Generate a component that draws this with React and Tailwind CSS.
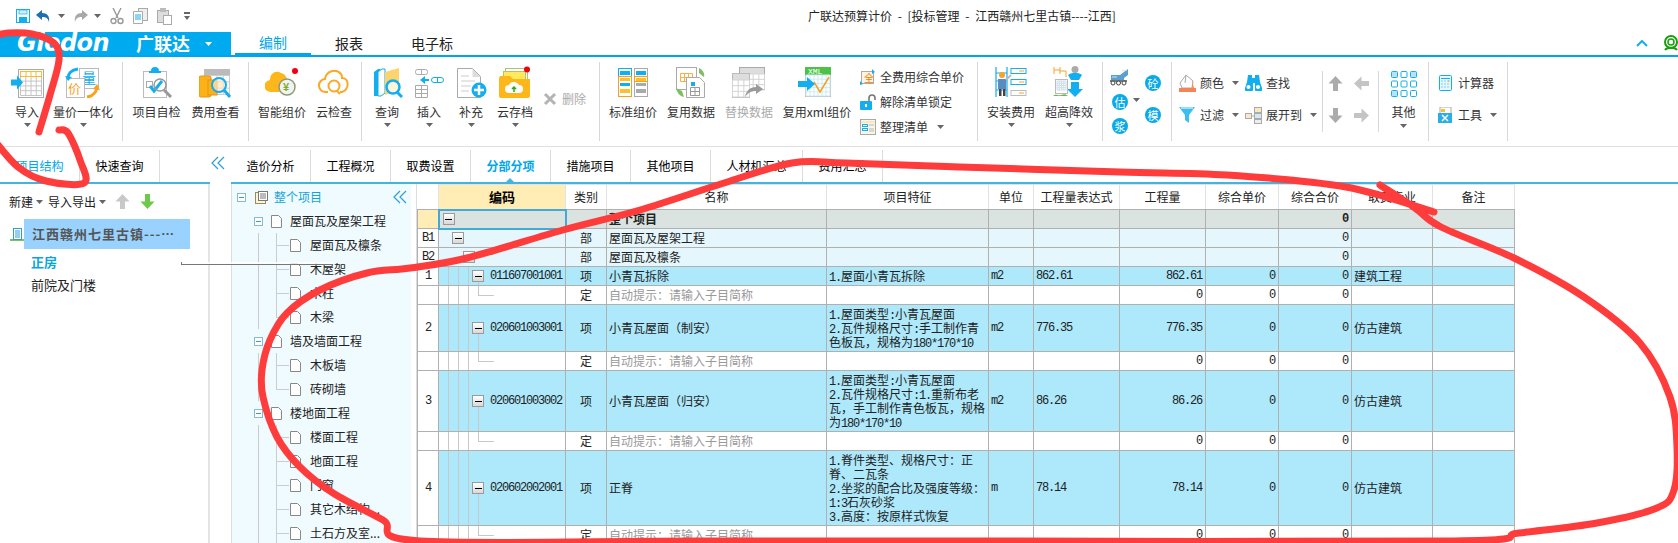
import React from "react";

const Caret = ({ className = "" }) => (
  <svg width="7" height="4" viewBox="0 0 7 4" className={className}><path d="M0 0h7L3.5 4z" fill="#666" /></svg>
);

const Grid = ({ x, y, cols, rows, w, h, stroke = "#aaa" }) => {
  const e = [];
  for (let i = 0; i <= cols; i++) e.push(<line key={"c" + i} x1={x + (w * i) / cols} x2={x + (w * i) / cols} y1={y} y2={y + h} stroke={stroke} />);
  for (let j = 0; j <= rows; j++) e.push(<line key={"r" + j} x1={x} x2={x + w} y1={y + (h * j) / rows} y2={y + (h * j) / rows} stroke={stroke} />);
  return <g>{e}</g>;
};

const I = {
  Import: () => (
    <svg width="34" height="32" viewBox="0 0 34 32">
      <rect x="8.5" y="3.5" width="25" height="28" fill="#fff" stroke="#aaa" />
      <Grid x={10.5} y={5.5} cols={4} rows={5} w={21} h={24} stroke="#c4c4c4" />
      <rect x="10.5" y="5.5" width="21" height="5" fill="#fff" stroke="#fdbb2c" />
      <line x1="16" x2="16" y1="5" y2="10" stroke="#fdbb2c" /><line x1="21" x2="21" y1="5" y2="10" stroke="#fdbb2c" /><line x1="26" x2="26" y1="5" y2="10" stroke="#fdbb2c" />
      <path d="M1 14h6v-4l6 7-6 7v-4H1z" transform="translate(0 -0.5)" fill="#12aeef" />
    </svg>
  ),
  Unify: () => (
    <svg width="36" height="32" viewBox="0 0 36 32">
      <rect x="14.5" y="2.5" width="19" height="20" fill="#fff" stroke="#bbb" />
      <text x="17" y="17" fontSize="14" fill="#12aeef" fontFamily="Noto Sans CJK SC">量</text>
      <rect x="1.5" y="12.5" width="18" height="19" fill="#fff" stroke="#bbb" />
      <text x="3" y="27" fontSize="13" fill="#f9a11b" fontFamily="Noto Sans CJK SC">价</text>
      <path d="M13 3C6 4 3 8 3 12" fill="none" stroke="#12aeef" strokeWidth="3" /><path d="M0 10l3 5 4-4z" fill="#12aeef" />
      <path d="M22 31c7-1 9-5 10-9" fill="none" stroke="#f9a11b" strokeWidth="3" /><path d="M28 23l4-5 3 6z" fill="#f9a11b" />
    </svg>
  ),
  Check: () => (
    <svg width="32" height="32" viewBox="0 0 32 32">
      <rect x="2.5" y="5.5" width="23" height="26" fill="#fff" stroke="#bbb" />
      <path d="M10 5a4 4 0 018 0h2v2h-12v-2z" fill="#12aeef" />
      <rect x="5.5" y="15.5" width="6" height="6" fill="none" stroke="#aaa" />
      <path d="M9 20l4 5 8-10" fill="none" stroke="#12aeef" strokeWidth="3" />
      <circle cx="19" cy="19" r="6" fill="none" stroke="#999" strokeWidth="1.5" />
      <path d="M23 24l7 7" stroke="#999" strokeWidth="3" />
    </svg>
  ),
  Fee: () => (
    <svg width="34" height="32" viewBox="0 0 34 32">
      <rect x="5.5" y="3.5" width="25" height="25" fill="#fff" stroke="#bbb" />
      <rect x="5" y="3" width="26" height="6" fill="#bbb" />
      <Grid x={5.5} y={9.5} cols={4} rows={3} w={25} h={19} stroke="#ccc" />
      <rect x="0" y="10" width="12" height="21" rx="2" fill="#fbb217" stroke="#e9901b" />
      <rect x="9" y="14" width="9" height="15" fill="#fbb217" stroke="#e9901b" />
      <circle cx="20" cy="19" r="7" fill="#fbe6c4" fillOpacity=".7" stroke="#12aeef" strokeWidth="2" />
      <path d="M25 24l6 7" stroke="#12aeef" strokeWidth="3" />
    </svg>
  ),
  Smart: () => (
    <svg width="34" height="32" viewBox="0 0 34 32">
      <path d="M6 26a6 6 0 01-1-12c0-7 6-10 11-7 4 1 6 4 6 8v11z" fill="#fdb71a" />
      <circle cx="22" cy="21" r="8" fill="#f2f2f2" stroke="#8d9a78" strokeWidth="1.5" />
      <text x="18" y="25" fontSize="11" fontWeight="700" fill="#7cad2e" fontFamily="Liberation Sans">¥</text>
      <circle cx="30" cy="5" r="3" fill="#f00010" />
    </svg>
  ),
  Cloud: () => (
    <svg width="32" height="32" viewBox="0 0 32 32">
      <path d="M10 26H8a6.5 6.5 0 01-1-13c1-8 11-11 16-5 1 1 1 3 1 4 7 0 8 11 0 14h-2" fill="none" stroke="#fba924" strokeWidth="2" />
      <circle cx="16" cy="20" r="5.5" fill="none" stroke="#fba924" strokeWidth="2" />
      <path d="M19 25l3 3" stroke="#fba924" strokeWidth="2" />
    </svg>
  ),
  Query: () => (
    <svg width="32" height="32" viewBox="0 0 32 32">
      <path d="M3 6l4-3h3l-3 3v24H3z" fill="#12aeef" />
      <path d="M7 6l4-3h3v24l-4 3H7z" fill="#fff" stroke="#12aeef" />
      <path d="M14 6l14-4v22l-14 5z" fill="#fcd36c" />
      <circle cx="22" cy="21" r="6.5" fill="#fff" fillOpacity=".75" stroke="#12aeef" strokeWidth="2.5" />
      <path d="M26 26l5 5" stroke="#12aeef" strokeWidth="3" />
    </svg>
  ),
  Insert: () => (
    <svg width="30" height="32" viewBox="0 0 30 32">
      <rect x="1.5" y="3.5" width="12" height="5" rx="2" fill="#fff" stroke="#aaa" /><line x1="7.5" x2="7.5" y1="3" y2="9" stroke="#aaa" />
      <path d="M6 14l5-4v3h4v2h-4v3z" fill="#12aeef" />
      <rect x="17.5" y="11.5" width="12" height="5" rx="2.5" fill="#fff" stroke="#12aeef" /><line x1="23.5" x2="23.5" y1="11" y2="17" stroke="#12aeef" />
      <Grid x={1.5} y={19.5} cols={2} rows={3} w={12} h={12} stroke="#aaa" />
    </svg>
  ),
  Add: () => (
    <svg width="32" height="32" viewBox="0 0 32 32">
      <path d="M2.5 2.5h15l8 8v21h-23z" fill="#fff" stroke="#aaa" />
      <path d="M17.5 3v8h8z" fill="#ddd" />
      <path d="M6 10h8M6 15h14M6 20h10M6 25h8" stroke="#ccc" />
      <circle cx="24" cy="24" r="7.5" fill="#12aeef" />
      <path d="M24 19v10M19 24h10" stroke="#fff" strokeWidth="2.5" />
    </svg>
  ),
  Archive: () => (
    <svg width="34" height="32" viewBox="0 0 34 32">
      <rect x="7.5" y="2.5" width="22" height="16" fill="#fff" stroke="#b4c16c" />
      <rect x="5.5" y="5.5" width="22" height="14" fill="#ffe95c" stroke="#b4c16c" />
      <path d="M2 10h10l3 3h17v17a2 2 0 01-2 2H3a2 2 0 01-2-2V12z" fill="#fdb71a" />
      <path d="M11 27a4 4 0 010-8c1-4 8-4 10 0a4 4 0 010 8z" fill="#fff" />
      <path d="M16 26v-5m-2 2l2-2 2 2" stroke="#2fa90f" strokeWidth="1.5" fill="none" />
      <circle cx="29" cy="3.5" r="3" fill="#f00010" />
    </svg>
  ),
  Std: () => (
    <svg width="32" height="32" viewBox="0 0 32 32">
      <rect x="1.5" y="2.5" width="13" height="28" fill="#fff" stroke="#12aeef" /><rect x="17.5" y="2.5" width="13" height="28" fill="#fff" stroke="#aaa" />
      <rect x="3" y="5" width="10" height="4" fill="#12aeef" /><rect x="19" y="5" width="10" height="4" fill="#12aeef" />
      <rect x="1.5" y="10.5" width="13" height="20" fill="#fff" stroke="#fa9f1a" /><rect x="3" y="12" width="10" height="3" fill="#fbc02d" />
      <rect x="17.5" y="10.5" width="13" height="5" fill="#fff" stroke="#fa9f1a" /><rect x="19" y="12" width="10" height="3" fill="#fbc02d" />
      <rect x="3" y="17" width="10" height="3" fill="#12aeef" /><rect x="19" y="17" width="10" height="3" fill="#aaa" />
      <rect x="3" y="23" width="10" height="4" fill="#fbc02d" /><rect x="19" y="23" width="10" height="4" fill="#aaa" />
    </svg>
  ),
  Reuse: () => (
    <svg width="32" height="32" viewBox="0 0 32 32">
      <rect x="1.5" y="1.5" width="20" height="22" fill="#fff" stroke="#aaa" />
      <Grid x={5.5} y={7.5} cols={3} rows={2} w={12} h={8} stroke="#fbb040" />
      <path d="M11.5 11.5h13l5 5v15h-18z" fill="#fff" stroke="#aaa" />
      <Grid x={15.5} y={21.5} cols={2} rows={2} w={9} h={8} stroke="#9a9a9a" />
      <rect x="16" y="16" width="4" height="4" fill="#12aeef" />
      <path d="M24 2c4 2 6 6 5 9l-5-4z" fill="#7cbf63" />
      <path d="M1 22c1 4 3 8 8 9l-2-6z" fill="#7cbf63" />
    </svg>
  ),
  Replace: () => (
    <svg width="34" height="32" viewBox="0 0 34 32">
      <rect x="7.5" y="1.5" width="25" height="22" fill="#fff" stroke="#aaa" /><rect x="8" y="2" width="24" height="6" fill="#ddd" />
      <Grid x={15.5} y={8} cols={3} rows={3} w={17} h={16} stroke="#d4d4d4" />
      <rect x="0.5" y="7.5" width="17" height="24" fill="#fff" stroke="#bbb" /><rect x="1" y="8" width="16" height="6" fill="#ddd" />
      <Grid x={0.5} y={14} cols={3} rows={3} w={17} h={17} stroke="#d4d4d4" />
      <path d="M13 31c1-6 5-10 11-10v-3l7 5-7 5v-3c-5 0-8 2-11 6z" fill="#9a9a9a" />
    </svg>
  ),
  Xml: () => (
    <svg width="40" height="32" viewBox="0 0 40 32">
      <rect x="8.5" y="1.5" width="25" height="29" fill="#fff" stroke="#bbb" />
      <rect x="8" y="1" width="26" height="8" fill="#4dc247" />
      <text x="11" y="8" fontSize="8" fill="#fff" fontFamily="Liberation Mono">XML</text>
      <Grid x={9} y={9} cols={6} rows={5} w={24} h={21} stroke="#cdebf7" />
      <path d="M17 16l6 10 9-15" stroke="#f9a11b" fill="none" strokeWidth="1.5" />
      <path d="M1 15h9v-4l8 7-8 7v-4H1z" fill="#12aeef" />
    </svg>
  ),
  Install: () => (
    <svg width="32" height="32" viewBox="0 0 32 32">
      <path d="M1 1v30M12 1v30M1 7h11M1 15h11M1 24h11" stroke="#12aeef" strokeWidth="1.2" />
      <circle cx="7" cy="9" r="3" fill="#f8a32a" /><rect x="3" y="13" width="8" height="10" fill="#5c8bbf" /><rect x="4" y="23" width="2.5" height="7" fill="#444" /><rect x="8" y="23" width="2.5" height="7" fill="#444" />
      <path d="M11 14l5-5" stroke="#bbb" strokeWidth="2" />
      <rect x="16" y="2.5" width="15" height="5" fill="#fff" stroke="#12aeef" /><rect x="16" y="13.5" width="15" height="5" fill="#fff" stroke="#12aeef" /><rect x="16" y="24.5" width="15" height="5" fill="#fff" stroke="#bbb" />
      <path d="M24 5h5M24 16h5M24 27h5" stroke="#f8a32a" />
    </svg>
  ),
  Lower: () => (
    <svg width="32" height="32" viewBox="0 0 32 32">
      <circle cx="22" cy="3.5" r="3.5" fill="#aaa" />
      <path d="M15 9c4-3 10-3 14 0l-3 5h-8z" fill="#12aeef" />
      <path d="M18 16h8v7h4l-8 8-8-8h4z" fill="#12aeef" />
      <path d="M7 1v7M1 1v7M1 4h6M7 5h6v6" stroke="#f8a32a" fill="none" />
      <rect x="2.5" y="13.5" width="12" height="14" fill="#fff" stroke="#bbb" /><Grid x={4} y={15} cols={4} rows={4} w={9} h={9} stroke="#cde" />
      <path d="M0 30c3-3 4 0 8-1s4-1 7 1z" fill="#6fb84c" />
    </svg>
  ),
  Truck: () => (
    <svg width="20" height="18" viewBox="0 0 20 18">
      <path d="M1 7h9l8-6v6l-4 3v3H1z" fill="#5c9fd0" /><path d="M2 9h5M12 3l5-1" stroke="#cfe7f5" />
      <rect x="0" y="12" width="17" height="2" fill="#777" />
      <circle cx="3" cy="15" r="2" fill="#fff" stroke="#444" /><circle cx="8.5" cy="15" r="2" fill="#fff" stroke="#444" /><circle cx="14" cy="15" r="2" fill="#fff" stroke="#444" />
    </svg>
  ),
  Color: () => (
    <svg width="17" height="18" viewBox="0 0 17 18">
      <path d="M7 1l7 6-1 7H3L1 9z" fill="#fff" stroke="#aaa" /><path d="M7 1l-1 8" stroke="#aaa" />
      <path d="M13 6l2 8h-2z" fill="#f9924b" /><rect x="0" y="14" width="17" height="4" fill="#f4835a" />
    </svg>
  ),
  Binoc: () => (
    <svg width="17" height="16" viewBox="0 0 17 16">
      <path d="M3 0h4v3h3V0h4l1 7 2 6a3 3 0 01-7 2V8H8v7a3 3 0 01-8-2l2-6z" fill="#12aeef" />
      <circle cx="3.5" cy="12" r="2" fill="#fff" /><circle cx="13" cy="12" r="2" fill="#fff" />
    </svg>
  ),
  Filter: () => (
    <svg width="17" height="16" viewBox="0 0 17 16"><path d="M0 0h16l-6 8v8l-4-3V8z" fill="#3dbcef" /><path d="M2 1h12" stroke="#fff" /></svg>
  ),
  Expand: () => (
    <svg width="17" height="17" viewBox="0 0 17 17">
      <rect x=".5" y="6.5" width="6" height="5" fill="#fbe7c4" stroke="#aaa" /><rect x="9.5" y=".5" width="7" height="5" fill="#fbe7c4" stroke="#aaa" /><rect x="9.5" y="6.5" width="7" height="5" fill="#cfe9f7" stroke="#aaa" /><rect x="9.5" y="12.5" width="7" height="4" fill="#eee" stroke="#aaa" />
      <path d="M7 9h2" stroke="#aaa" />
    </svg>
  ),
  Arrow: ({ d, c = "#ababab" }) => {
    const r = { up: 0, right: 90, down: 180, left: 270 }[d];
    return (
      <svg width="15" height="15" viewBox="0 0 15 15"><path d="M7.5 0l7 7.5H10V15H5V7.5H.5z" fill={c} transform={`rotate(${r} 7.5 7.5)`} /></svg>
    );
  },
  Nine: () => (
    <svg width="26" height="26" viewBox="0 0 26 26">
      {[0, 9.5, 19].map((x) => [0, 9.5, 19].map((y) => (
        <rect key={x + "-" + y} x={x + 0.5} y={y + 0.5} width="6" height="6" rx="1" fill={(y === 0 && x !== 9.5) || (y === 19 && x === 0) ? "#b8e2f6" : "#fff"} stroke="#12aeef" />
      )))}
    </svg>
  ),
  Calc: () => (
    <svg width="13" height="16" viewBox="0 0 13 16">
      <rect x=".5" y=".5" width="12" height="15" rx="1" fill="#e7f6fd" stroke="#12aeef" />
      <rect x="2" y="3" width="9" height="1" fill="#12aeef" />
      <path d="M2.5 6h1M5.5 6h1M2.5 9h1M5.5 9h1M2.5 12h1M5.5 12h1M8.5 9h1M8.5 12h1" stroke="#12aeef" /><path d="M8.5 6h2" stroke="#f0645a" />
    </svg>
  ),
  Tool: () => (
    <svg width="15" height="16" viewBox="0 0 15 16">
      <rect x="2" y="0" width="11" height="8" fill="#fff" stroke="#aaa" /><rect x="3" y="2" width="4" height="3" fill="#fbc02d" />
      <rect x="0" y="6" width="14" height="10" fill="#29afe6" /><path d="M4 8l6 6M10 8l-6 6" stroke="#fff" strokeWidth="1.5" />
    </svg>
  ),
  FullPrice: () => (
    <svg width="16" height="16" viewBox="0 0 16 16">
      <rect x="1.5" y="2.5" width="12" height="12" fill="#fdf3e0" stroke="#aaa" />
      <text x="4" y="13" fontSize="10" fill="#f07a00" fontFamily="Noto Sans CJK SC">全</text>
      <path d="M12 0l3 3-3 2zM0 12l3 3-3 1z" fill="#12aeef" />
    </svg>
  ),
  Lock: () => (
    <svg width="16" height="16" viewBox="0 0 16 16">
      <path d="M9 7V4a3 3 0 016 0v2" fill="none" stroke="#777" strokeWidth="1.6" />
      <rect x="0" y="7" width="12" height="9" rx="1" fill="#12aeef" /><rect x="5" y="10" width="2" height="3" fill="#fff" />
    </svg>
  ),
  Sort: () => (
    <svg width="16" height="16" viewBox="0 0 16 16">
      <rect x=".5" y=".5" width="15" height="15" fill="#faf5e6" stroke="#aaa" /><path d="M1 3h14" stroke="#f5d9a0" />
      <rect x="2.5" y="5.5" width="5" height="2" fill="#fff" stroke="#12aeef" /><rect x="2.5" y="9.5" width="5" height="2" fill="#fff" stroke="#12aeef" />
      <path d="M9 6h5M9 10h5M9 12h5" stroke="#ccc" strokeWidth="1.5" />
    </svg>
  ),
  Building: () => (
    <svg width="15" height="15" viewBox="0 0 15 15">
      <rect x="3.5" y="1.5" width="8" height="11" fill="#fff" stroke="#2d9fd8" /><path d="M5 4h5M5 6h5M5 8h5M5 10h5" stroke="#2d9fd8" />
      <path d="M0 13h15" stroke="#4cae3c" strokeWidth="1.5" />
    </svg>
  ),
  Doc: () => (
    <svg width="11" height="13" viewBox="0 0 11 13"><path d="M.5.5h7l3 3v9H.5z" fill="#fff" stroke="#888" /></svg>
  ),
  Root: () => (
    <svg width="13" height="13" viewBox="0 0 13 13">
      <rect x=".5" y="1.5" width="10" height="11" fill="#fdf3d6" stroke="#9a8a5a" /><rect x="3.5" y=".5" width="9" height="9" fill="#fff" stroke="#777" /><path d="M5 3h6M5 5h6M5 7h6" stroke="#777" />
    </svg>
  ),
};

const LargeBtn = ({ w, icon, label, arrow, muted }) => (
  <div className={`${w} flex flex-col items-center shrink-0`}>
    <div className="h-[38px] flex items-start justify-center">{icon}</div>
    <div className={`h-[16px] leading-[16px] whitespace-nowrap ${muted ? "text-[#aaa]" : ""}`}>{label}</div>
    {arrow && <Caret className="mt-[3px]" />}
  </div>
);

const Sep = ({ short }) =>
  short ? <div className="w-px h-[61px] bg-[#d8d8d8] mt-[14px] shrink-0" /> : <div className="w-px h-[79px] bg-[#d8d8d8] mt-[5px] shrink-0" />;

const Small = ({ icon, label, arrow, w }) => (
  <div className={`${w} flex items-center h-[32px] shrink-0`}>
    <div className="w-[17px] flex justify-center shrink-0">{icon}</div>
    <span className="ml-[4px] whitespace-nowrap">{label}</span>
    {arrow && <Caret className="ml-[8px]" />}
  </div>
);

const Badge = ({ t }) => (
  <div className="w-[16px] h-[16px] rounded-full bg-[#0aa9e8] text-white text-[11px] leading-[16px] text-center">{t}</div>
);

const Ribbon = () => (
  <div className="flex h-[90px] border-b border-[#e0e0e0] text-[12px] text-[#333]">
    <div className="flex w-[122px] pt-[9px] shrink-0">
      <LargeBtn w="w-[54px]" icon={<I.Import />} label="导入" arrow />
      <LargeBtn w="w-[58px]" icon={<I.Unify />} label="量价一体化" arrow />
    </div>
    <Sep />
    <div className="flex w-[125px] pt-[9px] pl-[4px] shrink-0">
      <LargeBtn w="w-[59px]" icon={<I.Check />} label="项目自检" />
      <LargeBtn w="w-[59px]" icon={<I.Fee />} label="费用查看" />
    </div>
    <Sep />
    <div className="flex w-[112px] pt-[9px] pl-[7px] shrink-0">
      <LargeBtn w="w-[52px]" icon={<I.Smart />} label="智能组价" />
      <LargeBtn w="w-[52px]" icon={<I.Cloud />} label="云检查" />
    </div>
    <Sep />
    <div className="flex w-[237px] pt-[9px] pl-[4px] shrink-0">
      <LargeBtn w="w-[42px]" icon={<I.Query />} label="查询" arrow />
      <LargeBtn w="w-[42px]" icon={<I.Insert />} label="插入" arrow />
      <LargeBtn w="w-[42px]" icon={<I.Add />} label="补充" arrow />
      <LargeBtn w="w-[46px]" icon={<I.Archive />} label="云存档" arrow />
      <div className="flex items-start pt-[25px] pl-[5px] text-[#aaa] gap-[5px]">
        <svg width="14" height="14" viewBox="0 0 14 14" className="mt-px"><path d="M2 2l10 10M12 2L2 12" stroke="#b4b4b4" strokeWidth="3" /></svg>
        <span className="leading-[16px] whitespace-nowrap">删除</span>
      </div>
    </div>
    <Sep />
    <div className="flex w-[377px] pt-[9px] pl-[4px] shrink-0">
      <LargeBtn w="w-[58px]" icon={<I.Std />} label="标准组价" />
      <LargeBtn w="w-[58px]" icon={<I.Reuse />} label="复用数据" />
      <LargeBtn w="w-[58px]" icon={<I.Replace />} label="替换数据" muted />
      <LargeBtn w="w-[78px]" icon={<I.Xml />} label="复用xml组价" />
      <div className="flex flex-col -mt-[2px] pl-[4px]">
        {[
          [<I.FullPrice />, "全费用综合单价"],
          [<I.Lock />, "解除清单锁定"],
          [<I.Sort />, "整理清单"],
        ].map(([ic, t], i) => (
          <div key={t} className="h-[25px] flex items-center">
            {ic}
            <span className="ml-[4px] whitespace-nowrap">{t}</span>
            {i === 2 && <Caret className="ml-[9px]" />}
          </div>
        ))}
      </div>
    </div>
    <Sep />
    <div className="flex w-[124px] pt-[9px] pl-[4px] shrink-0">
      <LargeBtn w="w-[58px]" icon={<I.Install />} label="安装费用" arrow />
      <LargeBtn w="w-[58px]" icon={<I.Lower />} label="超高降效" arrow />
    </div>
    <Sep />
    <div className="flex w-[68px] pl-[7px] shrink-0">
      <div className="flex flex-col items-center pt-[11px] gap-[8px] w-[20px]">
        <I.Truck />
        <Badge t="估" />
        <Badge t="浆" />
      </div>
      <Caret className="mt-[41px] ml-[3px]" />
      <div className="flex flex-col pt-[18px] gap-[16px] ml-[5px]">
        <Badge t="砼" />
        <Badge t="模" />
      </div>
    </div>
    <Sep />
    <div className="flex flex-col w-[150px] pt-[10px] pl-[7px] shrink-0">
      <div className="flex">
        <Small w="w-[66px]" icon={<I.Color />} label="颜色" arrow />
        <Small icon={<I.Binoc />} label="查找" />
      </div>
      <div className="flex">
        <Small w="w-[66px]" icon={<I.Filter />} label="过滤" arrow />
        <Small icon={<I.Expand />} label="展开到" arrow />
      </div>
    </div>
    <Sep short />
    <div className="w-[55px] pt-[10px] shrink-0 grid grid-cols-2 grid-rows-[32px_32px] pl-[5px] pr-[9px] gap-x-[11px] place-items-center">
      <I.Arrow d="up" /><I.Arrow d="left" c="#c4c4c4" />
      <I.Arrow d="down" /><I.Arrow d="right" c="#c4c4c4" />
    </div>
    <Sep short />
    <div className="flex w-[49px] pt-[14px] shrink-0">
      <div className="w-full flex flex-col items-center">
        <div className="h-[33px]"><I.Nine /></div>
        <div className="leading-[16px]">其他</div>
        <Caret className="mt-[4px]" />
      </div>
    </div>
    <Sep />
    <div className="flex flex-col w-[78px] pt-[10px] pl-[8px] shrink-0">
      <Small icon={<I.Calc />} label="计算器" />
      <Small icon={<I.Tool />} label="工具" arrow />
    </div>
    <Sep />
  </div>
);

const Tab = ({ w, children, active }) => (
  <div className={`${w} h-[32px] flex items-center justify-center border-r border-[#dcdcdc] shrink-0 relative text-[12px] ${active ? "text-[#00a6ed] font-bold" : "text-black"}`}>
    {children}
    {active && <div className="absolute bottom-0 left-[35px] w-0 h-0 border-x-[4px] border-x-transparent border-b-[4px] border-b-[#42b4e0]" />}
  </div>
);

const Box = ({ className = "" }) => (
  <div className={`w-[12px] h-[12px] border border-[#9a9a9a] bg-gradient-to-b from-white to-[#d8d8d8] flex items-center justify-center shrink-0 ${className}`}>
    <div className="w-[7px] h-px bg-black" />
  </div>
);

const TreeBox = () => (
  <div className="w-[9px] h-[9px] border border-[#8ab9d0] flex items-center justify-center shrink-0 bg-white">
    <div className="w-[5px] h-px bg-[#2d9fd8]" />
  </div>
);

const treeRows = [
  [1, "屋面瓦及屋架工程"], [2, "屋面瓦及檩条"], [2, "木屋架"], [2, "木柱"], [2, "木梁", true],
  [1, "墙及墙面工程"], [2, "木板墙"], [2, "砖砌墙", true],
  [1, "楼地面工程"], [2, "楼面工程"], [2, "地面工程"], [2, "门窗"], [2, "其它木结构..."], [2, "土石方及室..."],
];

const Tree = () => (
  <div className="w-[180px] h-full bg-[#f0fbff] border-l border-[#dcdcdc] text-[12px] text-[#222] shrink-0 overflow-hidden relative">
    <div className="h-[24px] mt-px flex items-center pl-[5px] text-[#12a4d8]">
      <TreeBox />
      <div className="ml-[9px]"><I.Root /></div>
      <span className="ml-[6px]">整个项目</span>
    </div>
    {treeRows.map(([lv, t, last]) =>
      lv === 1 ? (
        <div key={t} className="h-[24px] flex items-center pl-[22px]">
          <TreeBox />
          <div className="ml-[8px]"><I.Doc /></div>
          <span className="ml-[8px] whitespace-nowrap">{t}</span>
        </div>
      ) : (
        <div key={t} className="h-[24px] flex items-center pl-[58px] relative">
          <div className="absolute left-[26px] top-0 h-full w-px bg-[#ccc]" />
          <div className={`absolute left-[44px] top-0 w-px bg-[#ccc] ${last ? "h-[12px]" : "h-full"}`} />
          <div className="absolute left-[44px] top-[12px] w-[13px] h-px bg-[#ccc]" />
          <I.Doc />
          <span className="ml-[9px] whitespace-nowrap">{t}</span>
        </div>
      )
    )}
    <div className="absolute right-[2px] top-[6px]">
      <svg width="16" height="14" viewBox="0 0 16 14"><path d="M7 1L1 7l6 6M13 1L7 7l6 6" fill="none" stroke="#2d9fd8" strokeWidth="1.2" /></svg>
    </div>
  </div>
);

const Mixed = ({ text }) =>
  text.split(/([\x00-\x7f]+)/).map((s, i) =>
    /^[\x00-\x7f]+$/.test(s) ? (
      <span key={i} className="font-['Liberation_Mono',monospace] text-[12px] tracking-[-1.2px]">{s}</span>
    ) : (
      <span key={i}>{s}</span>
    )
  );

const Num = ({ v, bold }) => (
  <td className={`border border-[#b0b0b0] text-right pr-[3px] font-['Liberation_Mono',monospace] text-[12px] tracking-[-1.2px] ${bold ? "font-bold" : ""}`}>{v}</td>
);

const lineCls = "absolute top-0 h-full w-px bg-[#c8c8c8]";
const Guides = () => (
  <>
    <div className={`${lineCls} left-[9px]`} />
    <div className={`${lineCls} left-[19px]`} />
    <div className={`${lineCls} left-[29px]`} />
  </>
);

const items = [
  { h: "h-[19px]", no: "1", code: "011607001001", name: "小青瓦拆除", feat: ["1.屋面小青瓦拆除"], unit: "m2", expr: "862.61", qty: "862.61", spec: "建筑工程" },
  { h: "h-[47px]", no: "2", code: "020601003001", name: "小青瓦屋面（制安）", feat: ["1.屋面类型:小青瓦屋面", "2.瓦件规格尺寸:手工制作青", "色板瓦，规格为180*170*10"], unit: "m2", expr: "776.35", qty: "776.35", spec: "仿古建筑" },
  { h: "h-[61px]", no: "3", code: "020601003002", name: "小青瓦屋面（归安）", feat: ["1.屋面类型:小青瓦屋面", "2.瓦件规格尺寸:1.重新布老", "瓦，手工制作青色板瓦，规格", "为180*170*10"], unit: "m2", expr: "86.26", qty: "86.26", spec: "仿古建筑" },
  { h: "h-[75px]", no: "4", code: "020602002001", name: "正脊", feat: ["1.脊件类型、规格尺寸：正", "脊、二瓦条", "2.坐浆的配合比及强度等级：", "1:3石灰砂浆", "3.高度：按原样式恢复"], unit: "m", expr: "78.14", qty: "78.14", spec: "仿古建筑" },
];

const headers = ["编码", "类别", "名称", "项目特征", "单位", "工程量表达式", "工程量", "综合单价", "综合合价", "取费专业", "备注"];
const cell = "border border-[#b0b0b0]";
const mono = "font-['Liberation_Mono',monospace] text-[12px] tracking-[-1.2px]";

const Sheet = () => (
  <table className="table-fixed border-collapse w-[1097px] text-[12px] leading-[14px] text-[#222] shrink-0">
    <colgroup>
      <col className="w-[21px]" /><col className="w-[127px]" /><col className="w-[41px]" /><col className="w-[220px]" /><col className="w-[162px]" /><col className="w-[45px]" /><col className="w-[86px]" /><col className="w-[86px]" /><col className="w-[73px]" /><col className="w-[73px]" /><col className="w-[81px]" /><col className="w-[82px]" />
    </colgroup>
    <tbody>
      <tr className="h-[25px]">
        <td className="border-b border-[#b0b0b0]" />
        {headers.map((t, i) => (
          <td key={t} className={`text-center border border-[#e2e2e2] border-b-[#b0b0b0] ${i === 0 ? "bg-[#ffedb5] font-bold text-black text-[13px]" : ""}`}>{t}</td>
        ))}
      </tr>
      <tr className="h-[19px] bg-[#dae3df] font-bold">
        <td className={`${cell} bg-[#ffedb5]`} />
        <td className="border-2 border-[#42a9d8] p-0"><div className="flex items-center pl-[3px]"><Box /></div></td>
        <td className={cell} />
        <td className={`${cell} pl-[2px]`}>整个项目</td>
        <td className={cell} /><td className={cell} /><td className={cell} /><td className={cell} /><td className={cell} />
        <Num v="0" bold />
        <td className={cell} /><td className={cell} />
      </tr>
      {[["B1", "屋面瓦及屋架工程", "pl-[13px]"], ["B2", "屋面瓦及檩条", "pl-[24px]"]].map(([no, name, pl]) => (
        <tr key={no} className="h-[19px] bg-[#e5f7fc]">
          <td className={`${cell} bg-white text-center ${mono}`}>{no}</td>
          <td className={`${cell} p-0`}><div className={`flex items-center ${pl}`}><Box /></div></td>
          <td className={`${cell} text-center`}>部</td>
          <td className={`${cell} pl-[2px]`}>{name}</td>
          <td className={cell} /><td className={cell} /><td className={cell} /><td className={cell} /><td className={cell} />
          <Num v="0" />
          <td className={cell} /><td className={cell} />
        </tr>
      ))}
      {items.map((r) => (
        <React.Fragment key={r.no}>
          <tr className={`${r.h} bg-[#ade8fb]`}>
            <td className={`${cell} bg-white text-center ${mono}`}>{r.no}</td>
            <td className={`${cell} p-0 relative`}>
              <Guides />
              <div className="absolute left-[39px] top-1/2 bottom-0 w-px bg-[#c8c8c8]" />
              <div className="relative flex items-center pl-[33px]">
                <Box />
                <span className={`ml-[6px] ${mono}`}>{r.code}</span>
              </div>
            </td>
            <td className={`${cell} text-center`}>项</td>
            <td className={`${cell} pl-[2px]`}>{r.name}</td>
            <td className={`${cell} pl-[2px] whitespace-nowrap overflow-hidden`}>{r.feat.map((l) => <div key={l} className="h-[14px] leading-[14px]"><Mixed text={l} /></div>)}</td>
            <td className={`${cell} pl-[2px] ${mono}`}>{r.unit}</td>
            <td className={`${cell} pl-[2px] ${mono}`}>{r.expr}</td>
            <Num v={r.qty} /><Num v="0" /><Num v="0" />
            <td className={`${cell} pl-[2px]`}>{r.spec}</td>
            <td className={cell} />
          </tr>
          <tr className="h-[19px] bg-white">
            <td className={cell} />
            <td className={`${cell} p-0 relative`}>
              <Guides />
              <div className="absolute left-[39px] top-0 h-1/2 w-px bg-[#c8c8c8]" />
              <div className="absolute left-[39px] top-1/2 w-[16px] h-px bg-[#c8c8c8]" />
            </td>
            <td className={`${cell} text-center`}>定</td>
            <td className={`${cell} pl-[2px] text-[#999]`}>自动提示：请输入子目简称</td>
            <td className={cell} /><td className={cell} /><td className={cell} />
            <Num v="0" /><Num v="0" /><Num v="0" />
            <td className={cell} /><td className={cell} />
          </tr>
        </React.Fragment>
      ))}
    </tbody>
  </table>
);

const smooth = (pts) => {
  let d = `M${pts[0][0]} ${pts[0][1]}`;
  for (let i = 0; i < pts.length - 1; i++) {
    const p0 = pts[i - 1] || pts[i], p1 = pts[i], p2 = pts[i + 1], p3 = pts[i + 2] || p2;
    d += ` C${p1[0] + (p2[0] - p0[0]) / 6} ${p1[1] + (p2[1] - p0[1]) / 6} ${p2[0] - (p3[0] - p1[0]) / 6} ${p2[1] - (p3[1] - p1[1]) / 6} ${p2[0]} ${p2[1]}`;
  }
  return d;
};

const stroke1 = [[39, 132], [50, 95], [59, 60], [54, 43], [32, 34], [8, 33], [-6, 36]];
const stroke2 = [[-6, 140], [18, 167], [46, 181], [84, 183], [80, 160], [68, 133], [59, 130]];
const stroke3 = [[1434, 212], [1346, 187], [1227, 175], [1120, 172], [960, 167], [846, 163], [792, 163], [724, 183], [640, 210], [563, 230], [467, 258], [410, 268], [367, 273], [320, 290], [287, 313], [270, 340], [262, 370], [263, 397], [277, 437], [300, 467], [333, 493], [383, 520], [420, 541], [700, 541], [1000, 541], [1454, 541], [1519, 533], [1597, 523], [1657, 508], [1674, 490], [1677, 447], [1670, 397], [1640, 343], [1584, 297], [1514, 258], [1441, 227], [1415, 208], [1380, 185]];

export default function App() {
  return (
    <div className="relative w-[1678px] h-[543px] overflow-hidden bg-white font-['Noto_Sans_CJK_SC','Liberation_Sans',sans-serif]">
      {/* title bar */}
      <div className="h-[32px] flex items-center relative text-[12px] text-[#222]">
        <div className="flex items-center pl-[16px] h-full">
          <svg width="14" height="14" viewBox="0 0 14 14"><rect x=".5" y=".5" width="13" height="13" fill="#fff" stroke="#12aeef" /><rect x="3" y="1" width="8" height="4" fill="#cfeefb" stroke="#12aeef" strokeWidth=".7" /><rect x="3" y="8" width="8" height="5" fill="#12aeef" /></svg>
          <svg width="16" height="14" viewBox="0 0 16 14" className="ml-[6px]"><path d="M6 1L0 6l6 5V8c4 0 6 1 7 5 1-6-2-9-7-9z" fill="#1d6fb5" /></svg>
          <Caret className="ml-[6px]" />
          <svg width="16" height="14" viewBox="0 0 16 14" className="ml-[7px]"><path d="M10 1l6 5-6 5V8C6 8 4 9 3 13 2 7 5 4 10 4z" fill="#a8a8a8" /></svg>
          <Caret className="ml-[6px]" />
          <svg width="14" height="17" viewBox="0 0 14 17" className="ml-[9px]"><path d="M3 0l5 10M11 0L6 10" stroke="#999" strokeWidth="1.4" /><circle cx="3.5" cy="13" r="2.5" fill="none" stroke="#999" strokeWidth="1.4" /><circle cx="10.5" cy="13" r="2.5" fill="none" stroke="#999" strokeWidth="1.4" /></svg>
          <svg width="15" height="16" viewBox="0 0 15 16" className="ml-[9px]"><rect x="5.5" y=".5" width="9" height="12" fill="#eee" stroke="#aaa" /><path d="M.5 3.5h9v12h-9z" fill="#fff" stroke="#aaa" /><path d="M2 7h6M2 9h6M2 11h6" stroke="#12aeef" /></svg>
          <svg width="15" height="17" viewBox="0 0 15 17" className="ml-[9px]"><rect x=".5" y="2.5" width="11" height="12" fill="#ddd" stroke="#aaa" /><rect x="3" y="0" width="6" height="4" fill="#bbb" /><rect x="6.5" y="7.5" width="8" height="9" fill="#fff" stroke="#aaa" /></svg>
          <svg width="6" height="8" viewBox="0 0 6 8" className="ml-[12px]"><path d="M0 0h6v2H0zM0 4h6L3 8z" fill="#666" /></svg>
        </div>
        <span className="ml-[618px] whitespace-nowrap [word-spacing:3px]">广联达预算计价 - [投标管理 - 江西赣州七里古镇----江西]</span>
      </div>

      {/* menu row */}
      <div className="h-[25px] flex border-b-2 border-[#00a6ed] relative">
        <div className="w-[231px] h-[23px] bg-[#00aaef] flex items-center pl-[17px] text-white shrink-0">
          <span className="w-[119px] font-['DejaVu_Sans',sans-serif] font-bold italic text-[24px] leading-[23px] tracking-[-0.5px] whitespace-nowrap">Glodon</span>
          <span className="text-[18px] font-bold leading-[23px] whitespace-nowrap">广联达</span>
          <svg width="7" height="4" viewBox="0 0 7 4" className="ml-[15px]"><path d="M0 0h7L3.5 4z" fill="#fff" /></svg>
        </div>
        <div className="w-[76px] ml-[4px] h-[23px] border-b-2 border-[#00a6ed] flex items-center justify-center text-[14px] text-[#00a6ed]">编制</div>
        <div className="w-[76px] h-[23px] flex items-center justify-center text-[14px] text-[#222]">报表</div>
        <div className="w-[90px] h-[23px] flex items-center justify-center text-[14px] text-[#222]">电子标</div>
        <div className="ml-auto flex items-center h-[23px] gap-[16px] pr-[0px]">
          <svg width="12" height="7" viewBox="0 0 12 7"><path d="M1 6l5-5 5 5" fill="none" stroke="#12aeef" strokeWidth="2" /></svg>
          <svg width="14" height="17" viewBox="0 0 14 17"><circle cx="7" cy="7" r="6" fill="none" stroke="#18a00c" strokeWidth="2" /><circle cx="7" cy="7" r="3" fill="none" stroke="#18a00c" strokeWidth="1.5" /><path d="M1 15c2-3 10-3 12 0" fill="none" stroke="#18a00c" strokeWidth="2" /></svg>
        </div>
      </div>

      <Ribbon />
      <div className="h-[3px]" />

      {/* tab strips */}
      <div className="flex h-[34px]">
        <div className="w-[210px] h-full border-b-2 border-[#42b4e0] flex shrink-0">
          <Tab w="w-[80px]"><span className="text-[#00a6ed]">项目结构</span></Tab>
          <Tab w="w-[80px]">快速查询</Tab>
        </div>
        <div className="w-[21px] flex items-start justify-start pt-[6px] pl-[1px] shrink-0">
          <svg width="16" height="14" viewBox="0 0 16 14"><path d="M7 1L1 7l6 6M13 1L7 7l6 6" fill="none" stroke="#2d9fd8" strokeWidth="1.2" /></svg>
        </div>
        <div className="flex-1 h-full border-b-2 border-[#42b4e0] flex">
          <Tab w="w-[80px]">造价分析</Tab>
          <Tab w="w-[80px]">工程概况</Tab>
          <Tab w="w-[80px]">取费设置</Tab>
          <Tab w="w-[80px]" active>分部分项</Tab>
          <Tab w="w-[80px]">措施项目</Tab>
          <Tab w="w-[80px]">其他项目</Tab>
          <Tab w="w-[92px]">人材机汇总</Tab>
          <Tab w="w-[80px]">费用汇总</Tab>
        </div>
      </div>

      {/* body */}
      <div className="flex h-[359px] overflow-hidden">
        <div className="w-[210px] h-full border-r-2 border-[#e4e4e4] shrink-0 text-[12px] text-[#222]">
          <div className="h-[35px] flex items-center pl-[9px]">
            <span>新建</span><Caret className="ml-[3px]" />
            <span className="ml-[5px]">导入导出</span><Caret className="ml-[3px]" />
            <div className="ml-[9px]"><I.Arrow d="up" c="#c8c8c8" /></div>
            <div className="ml-[10px]"><I.Arrow d="down" c="#6cc94a" /></div>
          </div>
          <div className="flex items-center pl-[10px]">
            <I.Building />
            <div className="w-[166px] h-[30px] bg-[#99d2ff] flex items-center pl-[8px] -ml-px text-[#555] font-bold text-[13px] tracking-[1px] whitespace-nowrap">
              江西赣州七里古镇---<span className="font-['Liberation_Sans',sans-serif] tracking-[0px]">···</span>
            </div>
          </div>
          <div className="pl-[31px] mt-[1px] text-[13px] leading-[23px]">
            <div className="font-bold text-[#0aa5dc]">正房</div>
            <div>前院及门楼</div>
          </div>
        </div>
        <div className="w-[21px] shrink-0" />
        <Tree />
        <div className="w-[6px] shrink-0 border-r border-[#dcdcdc]" />
        <Sheet />
      </div>

      {/* stray leader line and hand-drawn marks lying over the screenshot */}
      <div className="absolute left-[181px] top-[262px] w-[152px] h-[3px] border-b border-[#777] border-l border-l-[#777] bg-white/80" />
      <svg width="1678" height="543" viewBox="0 0 1678 543" className="absolute left-0 top-0 pointer-events-none">
        {[stroke1, stroke2, stroke3].map((s, i) => (
          <path key={i} d={smooth(s)} fill="none" stroke="#ff3c3c" strokeWidth="7" strokeLinecap="round" strokeLinejoin="round" />
        ))}
      </svg>
    </div>
  );
}
